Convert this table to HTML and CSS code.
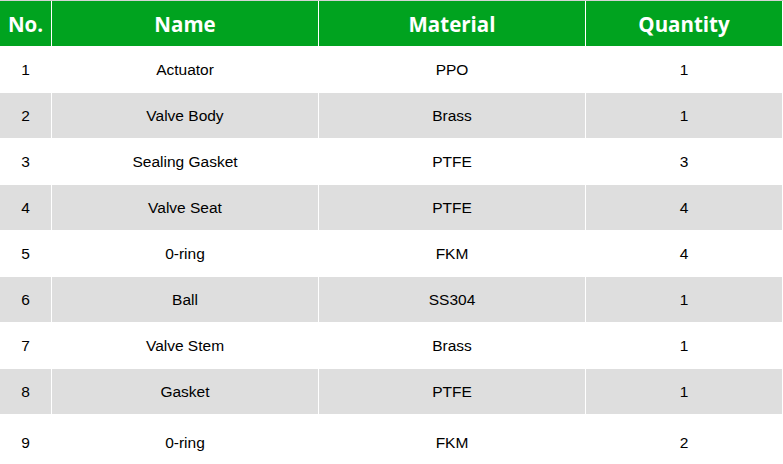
FILE: index.html
```html
<!DOCTYPE html>
<html>
<head>
<meta charset="utf-8">
<link rel="stylesheet" href="styles.css">
</head>
<body>
<table class="parts">
  <colgroup>
    <col class="c-no"><col class="c-name"><col class="c-mat"><col class="c-qty">
  </colgroup>
  <thead>
    <tr><th>No.</th><th>Name</th><th>Material</th><th>Quantity</th></tr>
  </thead>
  <tbody>
    <tr><td>1</td><td>Actuator</td><td>PPO</td><td>1</td></tr>
    <tr class="alt"><td>2</td><td>Valve Body</td><td>Brass</td><td>1</td></tr>
    <tr><td>3</td><td>Sealing Gasket</td><td>PTFE</td><td>3</td></tr>
    <tr class="alt"><td>4</td><td>Valve Seat</td><td>PTFE</td><td>4</td></tr>
    <tr><td>5</td><td>0-ring</td><td>FKM</td><td>4</td></tr>
    <tr class="alt"><td>6</td><td>Ball</td><td>SS304</td><td>1</td></tr>
    <tr><td>7</td><td>Valve Stem</td><td>Brass</td><td>1</td></tr>
    <tr class="alt"><td>8</td><td>Gasket</td><td>PTFE</td><td>1</td></tr>
    <tr class="last"><td>9</td><td>0-ring</td><td>FKM</td><td>2</td></tr>
  </tbody>
</table>
</body>
</html>
```
FILE: styles.css
```css
html, body {
  margin: 0;
  padding: 0;
  background: #ffffff;
  overflow: hidden;
}
body {
  border-top: 1px solid #d4d4d4;
}
.parts {
  width: 783px;
  border-collapse: separate;
  border-spacing: 0;
  table-layout: fixed;
  font-family: "Liberation Sans", Arial, sans-serif;
  font-size: 15.5px;
  color: #000000;
}
.c-no { width: 52px; }
.c-name { width: 267px; }
.c-mat { width: 267px; }
.c-qty { width: 197px; }
.parts th,
.parts td {
  padding: 0;
  text-align: center;
  vertical-align: middle;
  border-right: 1px solid #ffffff;
  border-bottom: 1px solid #ffffff;
  box-sizing: border-box;
}
.parts th {
  height: 46px;
  background: #00a31f;
  color: #ffffff;
  font-family: "Open Sans", "Noto Sans", sans-serif;
  font-weight: 700;
  font-size: 20.5px;
}
.parts td {
  height: 46px;
}
.parts tr.alt td {
  background: #dedede;
}
.parts tr.last td {
  height: 57px;
}
```
